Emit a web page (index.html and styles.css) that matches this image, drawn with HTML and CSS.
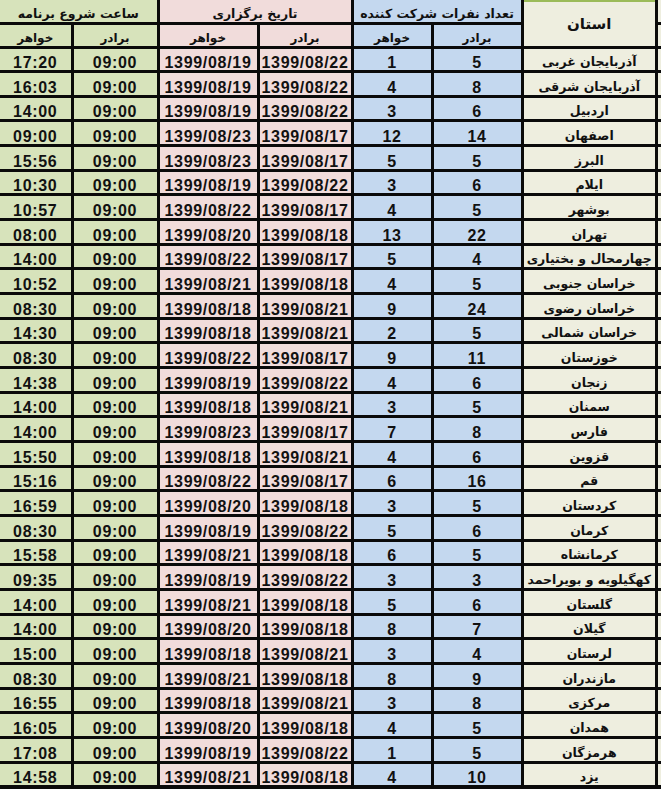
FILE: index.html
```html
<!DOCTYPE html>
<html lang="fa">
<head>
<meta charset="utf-8">
<title>جدول برنامه استان‌ها</title>
<link rel="stylesheet" href="styles.css">
</head>
<body>
<div class="sheet">
  <div class="cell grp green span2">ساعت شروع برنامه</div>
  <div class="cell grp pink span2">تاریخ برگزاری</div>
  <div class="cell grp blue span2">تعداد نفرات شرکت کننده</div>
  <div class="cell prov-head">استان</div>
  <div class="cell edge"></div>

  <div class="cell sub green">خواهر</div>
  <div class="cell sub green">برادر</div>
  <div class="cell sub pink">خواهر</div>
  <div class="cell sub pink">برادر</div>
  <div class="cell sub blue">خواهر</div>
  <div class="cell sub blue">برادر</div>
  <div class="cell edge"></div>

  <div class="cell num green">17:20</div><div class="cell num green">09:00</div><div class="cell num pink">1399/08/19</div><div class="cell num pink">1399/08/22</div><div class="cell num blue">1</div><div class="cell num blue">5</div><div class="cell prov">آذربایجان غربی</div><div class="cell edge"></div>
  <div class="cell num green">16:03</div><div class="cell num green">09:00</div><div class="cell num pink">1399/08/19</div><div class="cell num pink">1399/08/22</div><div class="cell num blue">4</div><div class="cell num blue">8</div><div class="cell prov">آذربایجان شرقی</div><div class="cell edge"></div>
  <div class="cell num green">14:00</div><div class="cell num green">09:00</div><div class="cell num pink">1399/08/19</div><div class="cell num pink">1399/08/22</div><div class="cell num blue">3</div><div class="cell num blue">6</div><div class="cell prov">اردبیل</div><div class="cell edge"></div>
  <div class="cell num green">09:00</div><div class="cell num green">09:00</div><div class="cell num pink">1399/08/23</div><div class="cell num pink">1399/08/17</div><div class="cell num blue">12</div><div class="cell num blue">14</div><div class="cell prov">اصفهان</div><div class="cell edge"></div>
  <div class="cell num green">15:56</div><div class="cell num green">09:00</div><div class="cell num pink">1399/08/23</div><div class="cell num pink">1399/08/17</div><div class="cell num blue">5</div><div class="cell num blue">5</div><div class="cell prov">البرز</div><div class="cell edge"></div>
  <div class="cell num green">10:30</div><div class="cell num green">09:00</div><div class="cell num pink">1399/08/19</div><div class="cell num pink">1399/08/22</div><div class="cell num blue">3</div><div class="cell num blue">6</div><div class="cell prov">ایلام</div><div class="cell edge"></div>
  <div class="cell num green">10:57</div><div class="cell num green">09:00</div><div class="cell num pink">1399/08/22</div><div class="cell num pink">1399/08/17</div><div class="cell num blue">4</div><div class="cell num blue">5</div><div class="cell prov">بوشهر</div><div class="cell edge"></div>
  <div class="cell num green">08:00</div><div class="cell num green">09:00</div><div class="cell num pink">1399/08/20</div><div class="cell num pink">1399/08/18</div><div class="cell num blue">13</div><div class="cell num blue">22</div><div class="cell prov">تهران</div><div class="cell edge"></div>
  <div class="cell num green">14:00</div><div class="cell num green">09:00</div><div class="cell num pink">1399/08/22</div><div class="cell num pink">1399/08/17</div><div class="cell num blue">5</div><div class="cell num blue">4</div><div class="cell prov">چهارمحال و بختیاری</div><div class="cell edge"></div>
  <div class="cell num green">10:52</div><div class="cell num green">09:00</div><div class="cell num pink">1399/08/21</div><div class="cell num pink">1399/08/18</div><div class="cell num blue">4</div><div class="cell num blue">5</div><div class="cell prov">خراسان جنوبی</div><div class="cell edge"></div>
  <div class="cell num green">08:30</div><div class="cell num green">09:00</div><div class="cell num pink">1399/08/18</div><div class="cell num pink">1399/08/21</div><div class="cell num blue">9</div><div class="cell num blue">24</div><div class="cell prov">خراسان رضوی</div><div class="cell edge"></div>
  <div class="cell num green">14:30</div><div class="cell num green">09:00</div><div class="cell num pink">1399/08/18</div><div class="cell num pink">1399/08/21</div><div class="cell num blue">2</div><div class="cell num blue">5</div><div class="cell prov">خراسان شمالی</div><div class="cell edge"></div>
  <div class="cell num green">08:30</div><div class="cell num green">09:00</div><div class="cell num pink">1399/08/22</div><div class="cell num pink">1399/08/17</div><div class="cell num blue">9</div><div class="cell num blue">11</div><div class="cell prov">خوزستان</div><div class="cell edge"></div>
  <div class="cell num green">14:38</div><div class="cell num green">09:00</div><div class="cell num pink">1399/08/19</div><div class="cell num pink">1399/08/22</div><div class="cell num blue">4</div><div class="cell num blue">6</div><div class="cell prov">زنجان</div><div class="cell edge"></div>
  <div class="cell num green">14:00</div><div class="cell num green">09:00</div><div class="cell num pink">1399/08/18</div><div class="cell num pink">1399/08/21</div><div class="cell num blue">3</div><div class="cell num blue">5</div><div class="cell prov">سمنان</div><div class="cell edge"></div>
  <div class="cell num green">14:00</div><div class="cell num green">09:00</div><div class="cell num pink">1399/08/23</div><div class="cell num pink">1399/08/17</div><div class="cell num blue">7</div><div class="cell num blue">8</div><div class="cell prov">فارس</div><div class="cell edge"></div>
  <div class="cell num green">15:50</div><div class="cell num green">09:00</div><div class="cell num pink">1399/08/18</div><div class="cell num pink">1399/08/21</div><div class="cell num blue">4</div><div class="cell num blue">6</div><div class="cell prov">قزوین</div><div class="cell edge"></div>
  <div class="cell num green">15:16</div><div class="cell num green">09:00</div><div class="cell num pink">1399/08/22</div><div class="cell num pink">1399/08/17</div><div class="cell num blue">6</div><div class="cell num blue">16</div><div class="cell prov">قم</div><div class="cell edge"></div>
  <div class="cell num green">16:59</div><div class="cell num green">09:00</div><div class="cell num pink">1399/08/20</div><div class="cell num pink">1399/08/18</div><div class="cell num blue">3</div><div class="cell num blue">5</div><div class="cell prov">کردستان</div><div class="cell edge"></div>
  <div class="cell num green">08:30</div><div class="cell num green">09:00</div><div class="cell num pink">1399/08/19</div><div class="cell num pink">1399/08/22</div><div class="cell num blue">5</div><div class="cell num blue">6</div><div class="cell prov">کرمان</div><div class="cell edge"></div>
  <div class="cell num green">15:58</div><div class="cell num green">09:00</div><div class="cell num pink">1399/08/21</div><div class="cell num pink">1399/08/18</div><div class="cell num blue">6</div><div class="cell num blue">5</div><div class="cell prov">کرمانشاه</div><div class="cell edge"></div>
  <div class="cell num green">09:35</div><div class="cell num green">09:00</div><div class="cell num pink">1399/08/19</div><div class="cell num pink">1399/08/22</div><div class="cell num blue">3</div><div class="cell num blue">3</div><div class="cell prov">کهگیلویه و بویراحمد</div><div class="cell edge"></div>
  <div class="cell num green">14:00</div><div class="cell num green">09:00</div><div class="cell num pink">1399/08/21</div><div class="cell num pink">1399/08/18</div><div class="cell num blue">5</div><div class="cell num blue">6</div><div class="cell prov">گلستان</div><div class="cell edge"></div>
  <div class="cell num green">14:00</div><div class="cell num green">09:00</div><div class="cell num pink">1399/08/20</div><div class="cell num pink">1399/08/18</div><div class="cell num blue">8</div><div class="cell num blue">7</div><div class="cell prov">گیلان</div><div class="cell edge"></div>
  <div class="cell num green">15:00</div><div class="cell num green">09:00</div><div class="cell num pink">1399/08/18</div><div class="cell num pink">1399/08/21</div><div class="cell num blue">3</div><div class="cell num blue">4</div><div class="cell prov">لرستان</div><div class="cell edge"></div>
  <div class="cell num green">08:30</div><div class="cell num green">09:00</div><div class="cell num pink">1399/08/21</div><div class="cell num pink">1399/08/18</div><div class="cell num blue">8</div><div class="cell num blue">9</div><div class="cell prov">مازندران</div><div class="cell edge"></div>
  <div class="cell num green">16:55</div><div class="cell num green">09:00</div><div class="cell num pink">1399/08/18</div><div class="cell num pink">1399/08/21</div><div class="cell num blue">3</div><div class="cell num blue">8</div><div class="cell prov">مرکزی</div><div class="cell edge"></div>
  <div class="cell num green">16:05</div><div class="cell num green">09:00</div><div class="cell num pink">1399/08/20</div><div class="cell num pink">1399/08/18</div><div class="cell num blue">4</div><div class="cell num blue">5</div><div class="cell prov">همدان</div><div class="cell edge"></div>
  <div class="cell num green">17:08</div><div class="cell num green">09:00</div><div class="cell num pink">1399/08/19</div><div class="cell num pink">1399/08/22</div><div class="cell num blue">1</div><div class="cell num blue">5</div><div class="cell prov">هرمزگان</div><div class="cell edge"></div>
  <div class="cell num green">14:58</div><div class="cell num green">09:00</div><div class="cell num pink">1399/08/21</div><div class="cell num pink">1399/08/18</div><div class="cell num blue">4</div><div class="cell num blue">10</div><div class="cell prov">یزد</div><div class="cell edge"></div>
</div>
</body>
</html>
```

FILE: styles.css
```css
html, body {
  margin: 0;
  padding: 0;
  background: #ffffff;
}

.sheet {
  width: 661px;
  height: 785.5px;
  padding-bottom: 3px;
  background: #0a0a0a;
  display: grid;
  grid-template-columns: 70.5px 83px 97px 91px 77px 87px 131.5px 3px;
  grid-template-rows: 21.5px 21px repeat(30, 1fr);
  column-gap: 3px;
  row-gap: 3px;
  font-family: "Liberation Sans", Arial, sans-serif;
  font-weight: bold;
  color: #111111;
}

.cell {
  display: flex;
  align-items: flex-end;
  justify-content: center;
  white-space: nowrap;
  min-width: 0;
}

.span2 {
  grid-column: span 2;
}

.green { background: #d7e3bb; }
.pink  { background: #f1dcdb; }
.blue  { background: #c4d8ef; }
.prov, .prov-head, .edge { background: #eeeedf; }

.num {
  font-size: 16px;
  line-height: 14px;
  letter-spacing: 0.7px;
}

.grp {
  font-family: "DejaVu Sans", "Liberation Sans", sans-serif;
  font-size: 12.5px;
  line-height: 16px;
}

.sub {
  font-family: "DejaVu Sans", "Liberation Sans", sans-serif;
  font-size: 12px;
  line-height: 15px;
}

.prov {
  overflow: hidden;
  font-family: "DejaVu Sans", "Liberation Sans", sans-serif;
  font-size: 12.5px;
  line-height: 16px;
}

.prov-head {
  grid-row: span 2;
  align-items: center;
  border-top: 2px solid #9bbb59;
  font-family: "DejaVu Sans", "Liberation Sans", sans-serif;
  font-size: 15px;
  line-height: 18px;
}
```
